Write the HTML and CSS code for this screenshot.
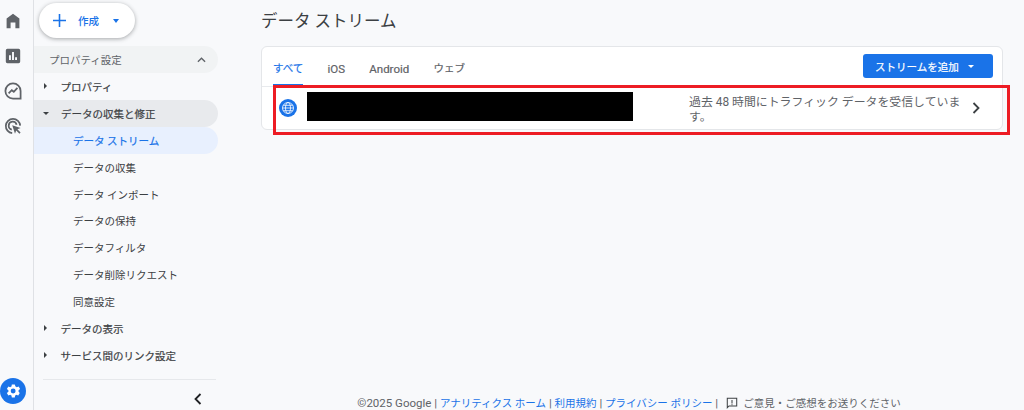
FILE: index.html
```html
<!DOCTYPE html>
<html lang="ja">
<head>
<meta charset="utf-8">
<title>データ ストリーム</title>
<link rel="stylesheet" href="styles.css">
</head>
<body>
<div class="app">
  <aside class="rail">
    <div class="rail-icons">
      <svg class="rail-icon" viewBox="0 0 24 24"><path d="M12 3 4 9v12h5v-7h6v7h5V9z"/></svg>
      <svg class="rail-icon" viewBox="0 0 24 24"><path fill-rule="evenodd" d="M5 3h14a2 2 0 0 1 2 2v14a2 2 0 0 1-2 2H5a2 2 0 0 1-2-2V5a2 2 0 0 1 2-2zm2 8v6h2.400v-6zm3.800-4v10h2.400V7zm3.800 6.500V17H17v-3.500z"/></svg>
      <svg class="rail-icon" viewBox="0 0 24 24" fill="none"><path class="line" d="M21.500 21.500H12a9.500 9.500 0 1 1 9.500-9.500z"/><path class="line" d="m6.500 15 4-4 2.500 2 4.500-5"/></svg>
      <svg class="rail-icon" viewBox="0 0 24 24" fill="none"><path class="line" d="M11 21a9 9 0 1 1 10-9.500"/><path class="line" d="M10.500 16.500a5 5 0 1 1 6-6"/><path class="solid" d="m11 11 10.500 3.500-4 1.700 4 4-1.500 1.500-4-4-1.500 4z"/></svg>
    </div>
    <button class="gear" aria-label="設定">
      <svg viewBox="0 0 24 24"><path fill-rule="evenodd" d="M19.400 13a7.500 7.500 0 0 0 0-2l2.100-1.600-2-3.500-2.500 1a7.500 7.500 0 0 0-1.700-1L14.400 3.200h-4l-.4 2.700a7.500 7.500 0 0 0-1.700 1l-2.500-1-2 3.500L5.900 11a7.500 7.500 0 0 0 0 2l-2.100 1.600 2 3.500 2.500-1a7.500 7.500 0 0 0 1.700 1l.4 2.700h4l.4-2.700a7.500 7.500 0 0 0 1.700-1l2.500 1 2-3.500zM12.200 15.300a3.300 3.300 0 1 1 0-6.600 3.300 3.300 0 0 1 0 6.600z"/></svg>
    </button>
  </aside>

  <nav class="side">
    <div class="create-wrap">
      <button class="create">
        <svg class="plus" viewBox="0 0 14 14"><path d="M7 0v14M0 7h14"/></svg>
        <span class="create-label">作成</span>
        <span class="caret caret-blue"></span>
      </button>
    </div>
    <div class="section-head">
      <span>プロパティ設定</span>
      <svg class="chev-up" viewBox="0 0 10 6"><path d="M1 5l4-4 4 4"/></svg>
    </div>
    <div class="item"><span class="tri tri-right"></span>プロパティ</div>
    <div class="item item-open"><span class="tri tri-down"></span>データの収集と修正</div>
    <div class="sub sub-active">データ ストリーム</div>
    <div class="sub">データの収集</div>
    <div class="sub">データ インポート</div>
    <div class="sub">データの保持</div>
    <div class="sub">データフィルタ</div>
    <div class="sub">データ削除リクエスト</div>
    <div class="sub">同意設定</div>
    <div class="item"><span class="tri tri-right"></span>データの表示</div>
    <div class="item"><span class="tri tri-right"></span>サービス間のリンク設定</div>
    <div class="side-foot">
      <svg class="chev-left" viewBox="0 0 8 12"><path d="M6.500 1 1.500 6l5 5"/></svg>
    </div>
  </nav>

  <main class="main">
    <h1 class="title">データ ストリーム</h1>
    <section class="card">
      <div class="card-top">
        <div class="tabs">
          <span class="tab tab-active tab-ja">すべて</span>
          <span class="tab">iOS</span>
          <span class="tab">Android</span>
          <span class="tab tab-ja">ウェブ</span>
        </div>
        <button class="add">ストリームを追加<span class="caret caret-white"></span></button>
      </div>
      <div class="row">
        <span class="globe">
          <svg viewBox="0 0 18 18" fill="none"><circle cx="9" cy="9" r="5.500"/><ellipse cx="9" cy="9" rx="2.500" ry="5.500"/><path d="M3.500 9h11M4.300 6.300h9.400M4.300 11.700h9.400"/></svg>
        </span>
        <span class="row-spacer"></span>
        <span class="status">過去 48 時間にトラフィック データを受信しています。</span>
        <svg class="chev-right" viewBox="0 0 8 12"><path d="M1.500 1l5 5-5 5"/></svg>
      </div>
    </section>
    <footer class="foot">
      <span>©2025 Google | <a>アナリティクス ホーム</a> | <a>利用規約</a> | <a>プライバシー ポリシー</a> |</span>
      <svg class="fb" viewBox="0 0 14 14" fill="none"><path d="M1.500 1.500h11v9h-9l-2 2z"/><path d="M7 3.500v4M7 8.500v1.200"/></svg>
      <span class="fb-text">ご意見・ご感想をお送りください</span>
    </footer>
  </main>
</div>
<div class="redact"></div>
<div class="annot"></div>
</body>
</html>
```

FILE: styles.css
```css
* { box-sizing: border-box; }
html, body { margin: 0; height: 100%; overflow: hidden; }
body {
  background: #f8f9fb;
  color: #3c4043;
  font-family: Roboto, "Noto Sans CJK JP", "Liberation Sans", sans-serif;
  position: relative;
}
.app { display: flex; width: 1024px; height: 410px; }

.rail {
  width: 34px;
  flex: none;
  border-right: 1px solid #dfe1e5;
  display: flex;
  flex-direction: column;
  align-items: center;
  justify-content: space-between;
  padding-top: 9px;
}
.rail-icons { display: flex; flex-direction: column; gap: 11px; align-items: center; margin-left: -8px; }
.rail-icon { width: 24px; height: 24px; fill: #5f6368; display: block; transform: scale(.8); }
.rail-icon .line { stroke: #5f6368; stroke-width: 2.200; fill: none; }
.rail-icon .solid { fill: #5f6368; }
.gear {
  width: 26px; height: 26px;
  margin: 0 0 6px -7px;
  border: 0; padding: 4px;
  background: #1a73e8;
  border-radius: 50%;
}
.gear svg { display: block; width: 18px; height: 18px; fill: #fff; }

.side { width: 184px; flex: none; display: flex; flex-direction: column; }
.create-wrap { height: 46px; padding: 3px 0 0 5px; }
.create {
  width: 96px; height: 35px;
  background: #fff;
  border: 0; border-radius: 18px;
  box-shadow: 0 1px 4px rgba(60,64,67,.45);
  display: flex; align-items: center;
  padding: 0 0 0 14px;
  color: #1a73e8;
  font: 500 10.500px Roboto, "Noto Sans CJK JP", sans-serif;
}
.plus { width: 13px; height: 13px; stroke: #1a73e8; stroke-width: 1.700; fill: none; flex: none; }
.create-label { margin-left: 12px; }
.caret { width: 0; height: 0; border-left: 3.500px solid transparent; border-right: 3.500px solid transparent; display: inline-block; }
.caret-blue { border-top: 4px solid #1a73e8; margin-left: 14px; }
.caret-white { border-top: 3.500px solid #fff; margin-left: 9px; }

.section-head {
  height: 27px;
  background: #f1f3f4;
  border-radius: 0 14px 14px 0;
  display: flex; align-items: center; justify-content: space-between;
  padding: 0 12px 0 15px;
  font-size: 10.500px;
  color: #5f6368;
}
.chev-up { width: 9px; height: 6px; fill: none; stroke: #5f6368; stroke-width: 1.500; }
.item, .sub { height: 26.900px; display: flex; align-items: center; font-size: 10.500px; border-radius: 0 14px 14px 0; }
.item { color: #3c4043; font-weight: 400; padding-left: 9px; -webkit-text-stroke: .2px #3c4043; }
.item-open { background: #e8eaed; }
.tri { width: 0; height: 0; margin-right: 13px; flex: none; }
.tri-right { border-top: 3px solid transparent; border-bottom: 3px solid transparent; border-left: 3.500px solid #3c4043; margin-left: 1px; margin-right: 13.500px; }
.tri-down { border-left: 3px solid transparent; border-right: 3px solid transparent; border-top: 3.500px solid #3c4043; margin-right: 12px; }
.sub { padding-left: 39px; color: #3c4043; }
.sub-active { background: #e8f0fe; color: #1a73e8; -webkit-text-stroke: .2px #1a73e8; }
.side-foot { margin: 10px 0 0 9px; border-top: 1px solid #e6e8eb; width: 173px; padding: 13px 0 0 151px; }
.chev-left { display: block; width: 8px; height: 12px; fill: none; stroke: #202124; stroke-width: 1.800; }

.main { flex: 1; padding: 0 21px 0 43px; display: flex; flex-direction: column; min-width: 0; }
.title { margin: 10px 0 0; height: 36px; font-size: 16.500px; font-weight: 400; line-height: 24px; color: #3c4043; }
.card {
  width: 742px; height: 84px;
  background: #fff;
  border: 1px solid #e4e6e9;
  border-radius: 6px;
  display: flex; flex-direction: column;
}
.card-top { height: 40px; display: flex; justify-content: space-between; border-bottom: 1px solid #e8eaed; padding: 7px 9px 0 11px; flex: none; }
.tabs { display: flex; gap: 24.200px; height: 32px; }
.tab { font-size: 11.500px; font-weight: 400; color: #5f6368; height: 32px; line-height: 30px; -webkit-text-stroke: .2px currentColor; }
.tab-ja { font-size: 10.500px; }
.tab-active { color: #1a73e8; border-bottom: 2px solid #1a73e8; }
.add {
  width: 130px; height: 24px;
  background: #1a73e8; border: 0; border-radius: 3px;
  color: #fff;
  font: 400 10.500px Roboto, "Noto Sans CJK JP", sans-serif;
  -webkit-text-stroke: .2px #fff;
  display: flex; align-items: center; justify-content: flex-start;
  padding: 0 0 0 12px;
}
.row { flex: 1; display: flex; align-items: center; padding: 0 20px 0 17px; }
.globe { width: 18px; height: 18px; background: #1a73e8; border-radius: 50%; flex: none; }
.globe svg { display: block; width: 18px; height: 18px; stroke: #fff; stroke-width: .8; }
.row-spacer { width: 392px; flex: none; }
.status { width: 274px; font-size: 11.900px; line-height: 14.500px; color: #5f6368; flex: none; margin-top: 3px; font-weight: 400; }
.chev-right { width: 8px; height: 12px; fill: none; stroke: #3c4043; stroke-width: 1.800; margin-left: 9px; flex: none; }

.foot {
  margin-top: auto;
  height: 15px;
  display: flex; align-items: center; justify-content: center;
  font-size: 11.500px; color: #5f6368;
  white-space: nowrap;
  padding-right: 6px;
  width: 742px;
}
.foot a { color: #1a73e8; font-size: 10.500px; }
.fb-text { font-size: 10.500px; }
.fb { width: 12px; height: 12px; stroke: #3c4043; stroke-width: 1.200; margin: 0 5px 0 8px; flex: none; }

.redact { position: absolute; left: 307px; top: 92px; width: 326px; height: 29px; background: #000; }
.annot { position: absolute; left: 273px; top: 85px; width: 737px; height: 50px; border: 3px solid #ed1c24; }
```
